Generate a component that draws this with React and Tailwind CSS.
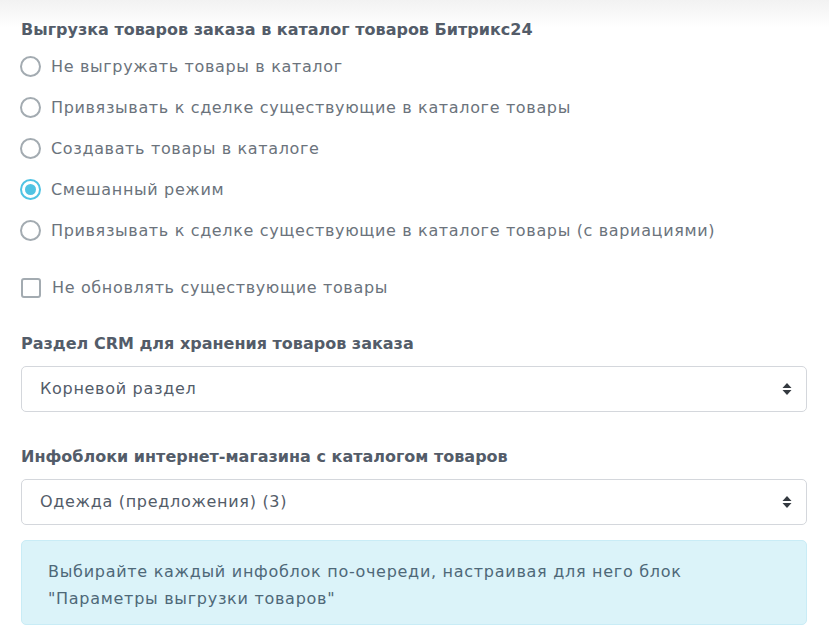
import React from "react";

function Radio({ checked, label }) {
  return (
    <label className="flex items-center h-[41px] gap-[10px]">
      {checked ? (
        <span className="w-[21px] h-[21px] rounded-full border-[2px] border-[#4fc3e3] flex items-center justify-center shrink-0">
          <span className="w-[11px] h-[11px] rounded-full bg-[#4fc3e3]" />
        </span>
      ) : (
        <span className="w-[21px] h-[21px] rounded-full border-[2px] border-[#a3abb1] shrink-0" />
      )}
      <span className="text-[16px] tracking-[0.65px] text-[#6b737c]">{label}</span>
    </label>
  );
}

function SelectBox({ value }) {
  return (
    <div className="h-[46px] border border-[#d4d7dc] rounded-[5px] flex items-center justify-between pl-[18px] pr-[14px] bg-white">
      <span className="text-[16px] tracking-[0.7px] text-[#535c69]">{value}</span>
      <svg width="10" height="14" viewBox="0 0 10 14">
        <path d="M5 1 L9.5 6 L0.5 6 Z" fill="#343a40" />
        <path d="M5 13 L9.5 8 L0.5 8 Z" fill="#343a40" />
      </svg>
    </div>
  );
}

export default function App() {
  return (
    <div
      className="w-[829px] h-[643px] bg-white relative overflow-hidden"
      style={{ fontFamily: '"DejaVu Sans", sans-serif' }}
    >
      <div className="absolute inset-x-0 top-0 h-[28px] bg-gradient-to-b from-[#f2f2f2] to-white" />
      <div className="relative pl-[20px] pr-[22px] pt-[19px]">
        <div className="text-[16px] font-bold text-[#535c69] leading-[22px] pl-[1px]">
          Выгрузка товаров заказа в каталог товаров Битрикс24
        </div>
        <div className="flex flex-col mt-[5px]">
          <Radio label="Не выгружать товары в каталог" />
          <Radio label="Привязывать к сделке существующие в каталоге товары" />
          <Radio label="Создавать товары в каталоге" />
          <Radio checked label="Смешанный режим" />
          <Radio label="Привязывать к сделке существующие в каталоге товары (с вариациями)" />
        </div>
        <label className="flex items-center gap-[11px] mt-[25px] pl-[1px]">
          <span className="w-[20px] h-[20px] rounded-[3px] border-[2px] border-[#a3abb1] shrink-0" />
          <span className="text-[16px] tracking-[0.65px] text-[#6b737c]">Не обновлять существующие товары</span>
        </label>
        <div className="text-[16px] font-bold text-[#535c69] leading-[22px] mt-[33px] pl-[1px]">
          Раздел CRM для хранения товаров заказа
        </div>
        <div className="mt-[11px] pl-[1px]">
          <SelectBox value="Корневой раздел" />
        </div>
        <div className="text-[16px] font-bold text-[#535c69] leading-[22px] mt-[34px] pl-[1px]">
          Инфоблоки интернет-магазина с каталогом товаров
        </div>
        <div className="mt-[11px] pl-[1px]">
          <SelectBox value="Одежда (предложения) (3)" />
        </div>
        <div className="mt-[15px] ml-[1px] bg-[#dbf3f9] border border-[#c9ecf6] rounded-[5px] px-[26px] pt-[17px] pb-[12px]">
          <p className="text-[16px] leading-[27px] tracking-[0.72px] text-[#4e6878]">
            Выбирайте каждый инфоблок по-очереди, настраивая для него блок
            <br />
            "Параметры выгрузки товаров"
          </p>
        </div>
      </div>
    </div>
  );
}
